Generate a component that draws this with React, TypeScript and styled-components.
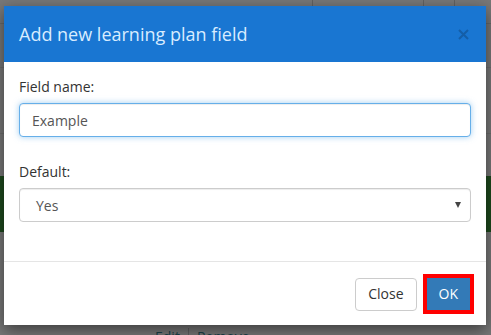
import React from 'react'
import styled, { createGlobalStyle } from 'styled-components'

const GlobalStyle = createGlobalStyle`
  html, body {
    margin: 0;
    padding: 0;
    background: #fff;
  }
  body {
    font-family: 'Open Sans', 'Liberation Sans', sans-serif;
    font-size: 14px;
    color: #333;
  }
  * {
    box-sizing: border-box;
  }
`

const Page = styled.div`
  position: relative;
  width: 491px;
  height: 335px;
  overflow: hidden;
  background: #fff;
  display: flex;
  flex-direction: column;
`

const HeaderCells = styled.div`
  display: grid;
  grid-template-columns: 313px 111px 31px 1fr;
  height: 24px;
  border-bottom: 1px solid #e2e2e2;
`

const HeaderCell = styled.div`
  border-right: 1px solid #d0d0d0;
  &:last-child {
    border-right: none;
  }
`

const TableRow = styled.div`
  height: ${x => x.$h}px;
  border-bottom: 1px solid #eaeaea;
`

const SuccessBar = styled.div`
  height: 56px;
  background: #3f9b3f;
  margin-top: ${x => x.$mt}px;
`

const Links = styled.div`
  margin-top: auto;
  display: flex;
  align-items: flex-start;
  gap: 8px;
  padding-left: 155px;
  height: 7px;
  overflow: visible;
  color: #3a8a9a;
  font-size: 14px;
  line-height: 18px;
`

const LinkSep = styled.span`
  width: 1px;
  height: 18px;
  background: #cfcfcf;
`

const Backdrop = styled.div`
  position: absolute;
  inset: 0;
  background: rgba(0, 0, 0, 0.53);
`

const Modal = styled.div`
  position: absolute;
  left: 4px;
  top: 6px;
  width: 482px;
  background: #fff;
  box-shadow: 0 5px 15px rgba(0, 0, 0, 0.5);
  display: flex;
  flex-direction: column;
`

const ModalHeader = styled.div`
  height: 56px;
  background: #1976d2;
  display: flex;
  align-items: center;
  justify-content: space-between;
  padding: 0 15px;
`

const Title = styled.h4`
  margin: 0;
  font-size: 18px;
  font-weight: 400;
  color: #d8ecff;
  line-height: 24px;
`

const CloseX = styled.button`
  border: none;
  background: none;
  padding: 0;
  margin-right: 2px;
  display: flex;
  align-items: center;
  cursor: pointer;
`

const ModalBody = styled.div`
  padding: 15px 15px 39px;
`

const FormGroup = styled.div`
  margin-bottom: ${x => x.$mb || 0}px;
`

const Label = styled.label`
  display: block;
  font-size: 14px;
  line-height: 20px;
  margin-bottom: 6px;
  color: #333;
`

const Input = styled.input`
  display: block;
  width: 100%;
  height: 34px;
  padding: 6px 12px;
  font-family: inherit;
  font-size: 14px;
  color: #555;
  border: 1px solid #66afe9;
  border-radius: 4px;
  outline: none;
  box-shadow: inset 0 1px 1px rgba(0, 0, 0, 0.075), 0 0 6px rgba(102, 175, 233, 0.6);
  caret-color: #333;
`

const SelectBox = styled.div`
  display: flex;
  align-items: center;
  justify-content: space-between;
  height: 34px;
  padding: 0 9px 0 16px;
  border: 1px solid #ccc;
  border-radius: 4px;
  color: #555;
  font-size: 14px;
  box-shadow: inset 0 1px 1px rgba(0, 0, 0, 0.075);
`

const Caret = styled.span`
  width: 0;
  height: 0;
  border-left: 3.5px solid transparent;
  border-right: 3.5px solid transparent;
  border-top: 6px solid #444;
`

const ModalFooter = styled.div`
  border-top: 1px solid #e5e5e5;
  padding: 12px 12px 11px;
  display: flex;
  justify-content: flex-end;
  align-items: center;
  gap: 6px;
`

const Button = styled.button`
  font-family: inherit;
  font-size: 14px;
  line-height: 20px;
  padding: 5px 12px;
  height: ${x => (x.$primary ? 40 : 33)}px;
  border-radius: ${x => (x.$primary ? 0 : 4)}px;
  border: ${x => (x.$primary ? '4px solid #ff0000' : '1px solid #ccc')};
  background: ${x => (x.$primary ? '#337ab7' : '#fff')};
  color: ${x => (x.$primary ? '#fff' : '#333')};
  cursor: pointer;
`

const App: React.FC = () => {
  return (
    <>
      <GlobalStyle />
      <Page>
        <HeaderCells>
          <HeaderCell />
          <HeaderCell />
          <HeaderCell />
          <HeaderCell />
        </HeaderCells>
        <TableRow $h={44} />
        <TableRow $h={66} />
        <SuccessBar $mt={42} />
        <Links>
          <span>Edit</span>
          <LinkSep />
          <span>Remove</span>
        </Links>
        <Backdrop />
        <Modal>
          <ModalHeader>
            <Title>Add new learning plan field</Title>
            <CloseX aria-label="Close">
              <svg width="11" height="11" viewBox="0 0 11 11">
                <path
                  d="M1 1 L10 10 M10 1 L1 10"
                  stroke="#145ea8"
                  strokeWidth="2"
                  fill="none"
                />
              </svg>
            </CloseX>
          </ModalHeader>
          <ModalBody>
            <FormGroup $mb={25}>
              <Label>Field name:</Label>
              <Input defaultValue="Example" autoFocus />
            </FormGroup>
            <FormGroup>
              <Label>Default:</Label>
              <SelectBox>
                <span>Yes</span>
                <Caret />
              </SelectBox>
            </FormGroup>
          </ModalBody>
          <ModalFooter>
            <Button>Close</Button>
            <Button $primary>OK</Button>
          </ModalFooter>
        </Modal>
      </Page>
    </>
  )
}

export default App
